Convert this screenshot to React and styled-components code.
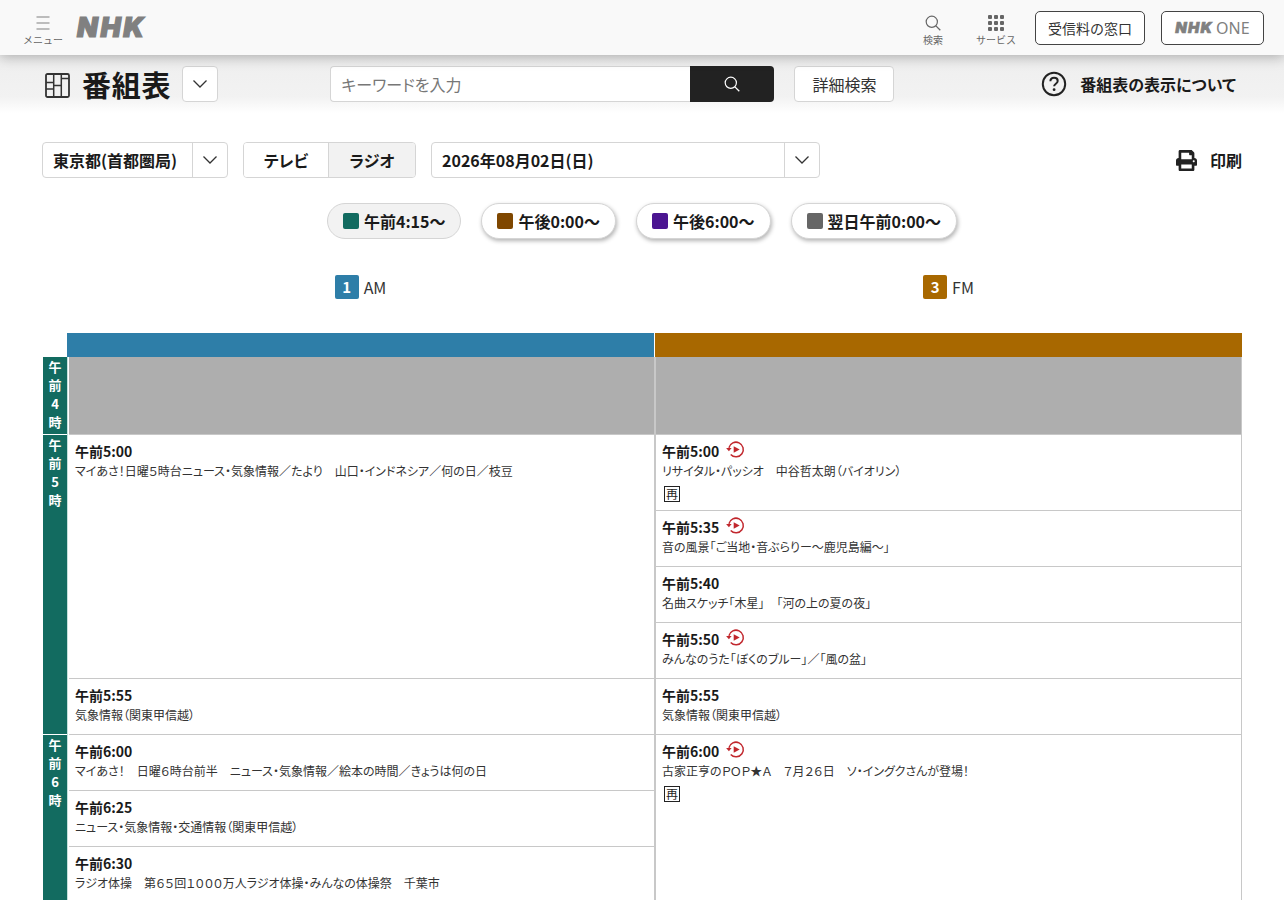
import React from 'react';
import styled, { createGlobalStyle } from 'styled-components';
import { FaPrint } from 'react-icons/fa';

const GlobalStyle = createGlobalStyle`
  html, body {
    margin: 0;
    padding: 0;
    height: 900px;
    overflow: hidden;
    background: #fff;
    color: #1a1a1a;
    font-family: "Noto Sans CJK JP", "Noto Sans", sans-serif;
    font-feature-settings: "palt";
  }
  * { box-sizing: border-box; }
`;

const Header = styled.header`
  position: relative;
  z-index: 2;
  height: 55px;
  background: #f9f9f9;
  box-shadow: 0 2px 12px rgba(0, 0, 0, 0.28);
  display: flex;
  align-items: center;
  padding: 0 20px 0 23px;
`;

const HeaderTool = styled.div`
  display: flex;
  flex-direction: column;
  align-items: center;
  width: ${(p) => p.$w}px;
  margin-right: ${(p) => p.$mr || 0}px;
  color: #666;
  font-size: 10px;
  font-feature-settings: normal;
  line-height: 12px;
  white-space: nowrap;
  padding-top: 5px;
  svg { display: block; margin-bottom: 3px; }
`;

const Logo = styled.span`
  font-family: "Inter", "Liberation Sans", sans-serif;
  font-style: italic;
  font-weight: 900;
  font-size: ${(p) => p.$size}px;
  letter-spacing: ${(p) => p.$spacing}px;
  color: #808080;
  -webkit-text-stroke: ${(p) => p.$stroke}px #808080;
  line-height: 1;
`;

const Spacer = styled.div`
  flex: 1;
`;

const OutlineLink = styled.div`
  height: 34px;
  width: ${(p) => p.$w}px;
  margin-left: ${(p) => p.$ml || 0}px;
  border: 1px solid #444;
  border-radius: 5px;
  background: #fff;
  display: flex;
  align-items: center;
  justify-content: center;
  gap: 3px;
  font-size: 14px;
  font-feature-settings: normal;
  color: #333;
`;

const OneText = styled.span`
  font-family: "Noto Sans", "Liberation Sans", sans-serif;
  font-size: 16px;
  color: #808080;
`;

const SubBar = styled.div`
  height: 58px;
  background: linear-gradient(#eeeeee, #f2f2f2 72%, #ffffff);
  display: flex;
  align-items: center;
  padding: 0 48px 0 45px;
`;

const PageTitle = styled.h1`
  margin: 0 11px 0 12px;
  font-size: 29px;
  font-weight: 700;
  line-height: 36px;
  letter-spacing: 0.8px;
`;

const SquareButton = styled.div`
  width: 36px;
  height: 36px;
  background: #fff;
  border: 1px solid #d5d5d5;
  border-radius: 4px;
  display: flex;
  align-items: center;
  justify-content: center;
`;

const SearchBox = styled.div`
  display: flex;
  width: 444px;
  height: 36px;
  margin-left: 112px;
`;

const SearchInput = styled.div`
  flex: 1;
  background: #fff;
  border: 1px solid #d5d5d5;
  border-right: 0;
  border-radius: 4px 0 0 4px;
  color: #777;
  font-size: 16px;
  line-height: 34px;
  padding-left: 10px;
`;

const SearchButton = styled.div`
  width: 84px;
  background: #222;
  border-radius: 0 4px 4px 0;
  display: flex;
  align-items: center;
  justify-content: center;
`;

const DetailButton = styled.div`
  width: 100px;
  height: 36px;
  margin-left: 20px;
  background: #fff;
  border: 1px solid #d5d5d5;
  border-radius: 4px;
  font-size: 16px;
  line-height: 34px;
  text-align: center;
  color: #333;
`;

const AboutLink = styled.div`
  display: flex;
  align-items: center;
  gap: 13px;
  font-size: 16px;
  font-weight: 700;
`;

const Controls = styled.div`
  display: flex;
  align-items: center;
  height: 36px;
  margin: 29px 42px 0 42px;
`;

const SelectBox = styled.div`
  display: flex;
  width: ${(p) => p.$w}px;
  height: 36px;
  margin-right: 15px;
  border: 1px solid #d5d5d5;
  border-radius: 4px;
  font-size: 16px;
  font-weight: 700;
  line-height: 34px;
`;

const SelectLabel = styled.div`
  flex: 1;
  padding-left: 10px;
  border-right: 1px solid #d5d5d5;
`;

const SelectArrow = styled.div`
  width: 34px;
  display: flex;
  align-items: center;
  justify-content: center;
`;

const Tabs = styled.div`
  display: flex;
  width: 173px;
  height: 36px;
  margin-right: 15px;
  border: 1px solid #d5d5d5;
  border-radius: 4px;
  overflow: hidden;
`;

const Tab = styled.div`
  flex: ${(p) => (p.$active ? '1' : '0 0 84px')};
  text-align: center;
  font-size: 16px;
  font-weight: 700;
  line-height: 34px;
  background: ${(p) => (p.$active ? '#f2f2f2' : '#fff')};
  border-left: ${(p) => (p.$active ? '1px solid #d5d5d5' : '0')};
`;

const PrintLink = styled.div`
  margin-left: auto;
  display: flex;
  align-items: center;
  gap: 13px;
  font-size: 16px;
  font-weight: 700;
`;

const Pills = styled.div`
  display: flex;
  justify-content: center;
  gap: 20px;
  margin-top: 25px;
`;

const Pill = styled.div`
  height: 36px;
  padding: 0 15px;
  display: flex;
  align-items: center;
  gap: 5px;
  border-radius: 18px;
  border: 1px solid #d5d5d5;
  background: ${(p) => (p.$active ? '#f2f2f2' : '#fff')};
  box-shadow: ${(p) => (p.$active ? 'none' : '1px 2px 4px rgba(0, 0, 0, 0.3)')};
  font-size: 16px;
  font-weight: 700;
`;

const Swatch = styled.span`
  width: 16px;
  height: 16px;
  border-radius: 2px;
  background: ${(p) => p.$color};
`;

const ChannelRow = styled.div`
  display: flex;
  margin: 36px 42px 0 68px;
`;

const ChannelLabel = styled.div`
  flex: ${(p) => (p.$first ? '0 0 587px' : '1')};
  display: flex;
  justify-content: center;
  align-items: center;
  gap: 5px;
  height: 24px;
  padding-right: ${(p) => (p.$first ? 2 : 0)}px;
  font-size: 16px;
  color: #333;
`;

const ChannelBadge = styled.span`
  width: 24px;
  height: 24px;
  border-radius: 2px;
  background: ${(p) => p.$color};
  color: #fff;
  font-size: 15px;
  font-weight: 700;
  line-height: 24px;
  text-align: center;
`;

const Schedule = styled.div`
  display: flex;
  margin: 34px 42px 0 43px;
`;

const HourColumn = styled.div`
  width: 24px;
  padding-top: 24px;
  flex-shrink: 0;
`;

const HourCell = styled.div`
  height: ${(p) => p.$h}px;
  background: #126b60;
  border-bottom: 1px solid #fff;
  color: #fff;
  font-size: 13px;
  font-weight: 700;
  line-height: 18.4px;
  text-align: center;
  padding-top: 1px;
  span { display: block; }
`;

const Station = styled.div`
  flex: ${(p) => (p.$first ? '0 0 588px' : '1')};
  min-width: 0;
  border-left: ${(p) => (p.$first ? '1px solid #c4e0dc' : '0')};
`;

const StationBar = styled.div`
  height: 24px;
  margin: ${(p) => (p.$first ? '0 1px 0 -1px' : '0')};
  background: ${(p) => p.$color};
`;

const Slots = styled.div`
  border-left: 1px solid ${(p) => (p.$first ? '#fff' : '#c8c8c8')};
  border-right: 1px solid #c8c8c8;
`;

const Closed = styled.div`
  height: 78px;
  background: #aeaeae;
  border-bottom: 1px solid #c8c8c8;
`;

const Program = styled.div`
  height: ${(p) => p.$h}px;
  border-bottom: 1px solid #c8c8c8;
  padding: 6px 0 0 6px;
  overflow: hidden;
`;

const TimeRow = styled.div`
  display: flex;
  align-items: flex-start;
  gap: 6px;
  height: 21px;
  font-size: 14px;
  font-weight: 700;
  line-height: 20px;
  svg { margin-top: -1px; }
`;

const Title = styled.div`
  font-size: 12px;
  line-height: 18px;
  color: #333;
  white-space: nowrap;
`;

const RerunMark = styled.div`
  width: 16px;
  height: 16px;
  margin: 6px 0 0 2px;
  border: 1px solid #222;
  font-size: 12px;
  line-height: 14px;
  text-align: center;
  color: #222;
`;

const Chevron = () => (
  <svg width="16" height="10" viewBox="0 0 16 10" fill="none">
    <path d="M1.5 1.5 8 8l6.5-6.5" stroke="#333" strokeWidth="1.3" />
  </svg>
);

const MenuIcon = () => (
  <svg width="16" height="16" viewBox="0 0 16 16" fill="none">
    <path d="M1.500 2h13M1.500 8h13M1.500 14h13" stroke="#808080" strokeWidth="1.2" />
  </svg>
);

const SearchIcon = ({ color, size }) => (
  <svg width={size} height={size} viewBox="0 0 16 16" fill="none">
    <circle cx="6.8" cy="6.8" r="5.6" stroke={color} strokeWidth="1.2" />
    <path d="M10.9 10.9 15.3 15.3" stroke={color} strokeWidth="1.3" />
  </svg>
);

const ServicesIcon = () => (
  <svg width="16" height="16" viewBox="0 0 16 16" fill="#666">
    {[0, 6, 12].map((y) =>
      [0, 6, 12].map((x) => <rect key={`${x}-${y}`} x={x} y={y} width="4" height="4" rx="1" />)
    )}
  </svg>
);

const TableIconSvg = styled.svg`
  margin-top: 2px;
  flex-shrink: 0;
`;

const TableIcon = () => (
  <TableIconSvg width="25" height="25" viewBox="0 0 25 25" fill="none">
    <rect x="1" y="1" width="23" height="23" rx="1.500" stroke="#333" strokeWidth="1.800" />
    <path d="M8.700 1v23M16.300 1v23M1 9.500h7.700M1 16h7.700M8.700 12.500h7.600M16.300 5.500h7.700" stroke="#333" strokeWidth="1.500" />
  </TableIconSvg>
);

const HelpIcon = () => (
  <svg width="26" height="26" viewBox="0 0 26 26" fill="none">
    <circle cx="13" cy="13" r="11.2" stroke="#222" strokeWidth="2" />
    <path d="M9.400 10.300c0-2.200 1.600-3.500 3.700-3.500s3.600 1.300 3.600 3.100c0 2.800-3.600 2.800-3.600 5.400" stroke="#222" strokeWidth="2" />
    <circle cx="13.100" cy="18.700" r="1.400" fill="#222" />
  </svg>
);

const ReplayIcon = () => (
  <svg width="20" height="20" viewBox="0 0 20 20" fill="none">
    <path d="M5.700 14.500A7.300 7.300 0 1 0 3.900 7.700" stroke="#c1272d" strokeWidth="1.500" />
    <path d="M1.100 8h5.500L3.900 11.300z" fill="#c1272d" />
    <path d="M8.700 6.200 14.700 9.500l-6 3.300z" fill="#c1272d" />
  </svg>
);

const slots = [
  { key: 'h4', h: 78, label: ['午', '前', '4', '時'] },
  { key: 'h5', h: 300, label: ['午', '前', '5', '時'] },
  { key: 'h6', h: 300, label: ['午', '前', '6', '時'] },
];

const amPrograms = [
  { time: '午前5:00', h: 244, title: 'マイあさ！日曜５時台ニュース・気象情報／たより　山口・インドネシア／何の日／枝豆' },
  { time: '午前5:55', h: 56, title: '気象情報（関東甲信越）' },
  { time: '午前6:00', h: 56, title: 'マイあさ！　日曜６時台前半　ニュース・気象情報／絵本の時間／きょうは何の日' },
  { time: '午前6:25', h: 56, title: 'ニュース・気象情報・交通情報（関東甲信越）' },
  { time: '午前6:30', h: 56, title: 'ラジオ体操　第６５回１０００万人ラジオ体操・みんなの体操祭　千葉市' },
];

const fmPrograms = [
  { time: '午前5:00', h: 76, replay: true, rerun: true, title: 'リサイタル・パッシオ　中谷哲太朗（バイオリン）' },
  { time: '午前5:35', h: 56, replay: true, title: '音の風景「ご当地・音ぶらりー～鹿児島編～」' },
  { time: '午前5:40', h: 56, title: '名曲スケッチ「木星」　「河の上の夏の夜」' },
  { time: '午前5:50', h: 56, replay: true, title: 'みんなのうた「ぼくのブルー」／「風の盆」' },
  { time: '午前5:55', h: 56, title: '気象情報（関東甲信越）' },
  { time: '午前6:00', h: 168, replay: true, rerun: true, title: '古家正亨のＰＯＰ★Ａ　７月２６日　ソ・イングクさんが登場！' },
];

const periods = [
  { label: '午前4:15～', color: '#126b60', active: true },
  { label: '午後0:00～', color: '#7f4700' },
  { label: '午後6:00～', color: '#4b1591' },
  { label: '翌日午前0:00～', color: '#666666' },
];

const ProgramList = ({ items, first }) => (
  <Slots $first={first}>
    <Closed />
    {items.map((item) => (
      <Program key={item.time} $h={item.h}>
        <TimeRow>
          {item.time}
          {item.replay && <ReplayIcon />}
        </TimeRow>
        <Title>{item.title}</Title>
        {item.rerun && <RerunMark>再</RerunMark>}
      </Program>
    ))}
  </Slots>
);

export default function App() {
  return (
    <>
      <GlobalStyle />
      <Header>
        <HeaderTool $w={40} $mr={14}>
          <MenuIcon />
          メニュー
        </HeaderTool>
        <Logo $size={27} $spacing={2.6} $stroke={1.2}>NHK</Logo>
        <Spacer />
        <HeaderTool $w={40} $mr={23}>
          <SearchIcon color="#666" size={16} />
          検索
        </HeaderTool>
        <HeaderTool $w={40} $mr={19}>
          <ServicesIcon />
          サービス
        </HeaderTool>
        <OutlineLink $w={110}>受信料の窓口</OutlineLink>
        <OutlineLink $w={103} $ml={16}>
          <Logo $size={15} $spacing={1.2} $stroke={0.6}>NHK</Logo>
          <OneText>ONE</OneText>
        </OutlineLink>
      </Header>
      <SubBar>
        <TableIcon />
        <PageTitle>番組表</PageTitle>
        <SquareButton><Chevron /></SquareButton>
        <SearchBox>
          <SearchInput>キーワードを入力</SearchInput>
          <SearchButton><SearchIcon color="#fff" size={16} /></SearchButton>
        </SearchBox>
        <DetailButton>詳細検索</DetailButton>
        <Spacer />
        <AboutLink>
          <HelpIcon />
          番組表の表示について
        </AboutLink>
      </SubBar>
      <Controls>
        <SelectBox $w={186}>
          <SelectLabel>東京都(首都圏局)</SelectLabel>
          <SelectArrow><Chevron /></SelectArrow>
        </SelectBox>
        <Tabs>
          <Tab>テレビ</Tab>
          <Tab $active>ラジオ</Tab>
        </Tabs>
        <SelectBox $w={389}>
          <SelectLabel>2026年08月02日(日)</SelectLabel>
          <SelectArrow><Chevron /></SelectArrow>
        </SelectBox>
        <PrintLink>
          <FaPrint size={21} color="#222" />
          印刷
        </PrintLink>
      </Controls>
      <Pills>
        {periods.map((p) => (
          <Pill key={p.label} $active={p.active}>
            <Swatch $color={p.color} />
            {p.label}
          </Pill>
        ))}
      </Pills>
      <ChannelRow>
        <ChannelLabel $first>
          <ChannelBadge $color="#2e7ea8">1</ChannelBadge>
          AM
        </ChannelLabel>
        <ChannelLabel>
          <ChannelBadge $color="#a86800">3</ChannelBadge>
          FM
        </ChannelLabel>
      </ChannelRow>
      <Schedule>
        <HourColumn>
          {slots.map((s) => (
            <HourCell key={s.key} $h={s.h}>
              {s.label.map((c, i) => <span key={i}>{c}</span>)}
            </HourCell>
          ))}
        </HourColumn>
        <Station $first>
          <StationBar $first $color="#2e7ea8" />
          <ProgramList items={amPrograms} first />
        </Station>
        <Station>
          <StationBar $color="#a86800" />
          <ProgramList items={fmPrograms} />
        </Station>
      </Schedule>
    </>
  );
}
